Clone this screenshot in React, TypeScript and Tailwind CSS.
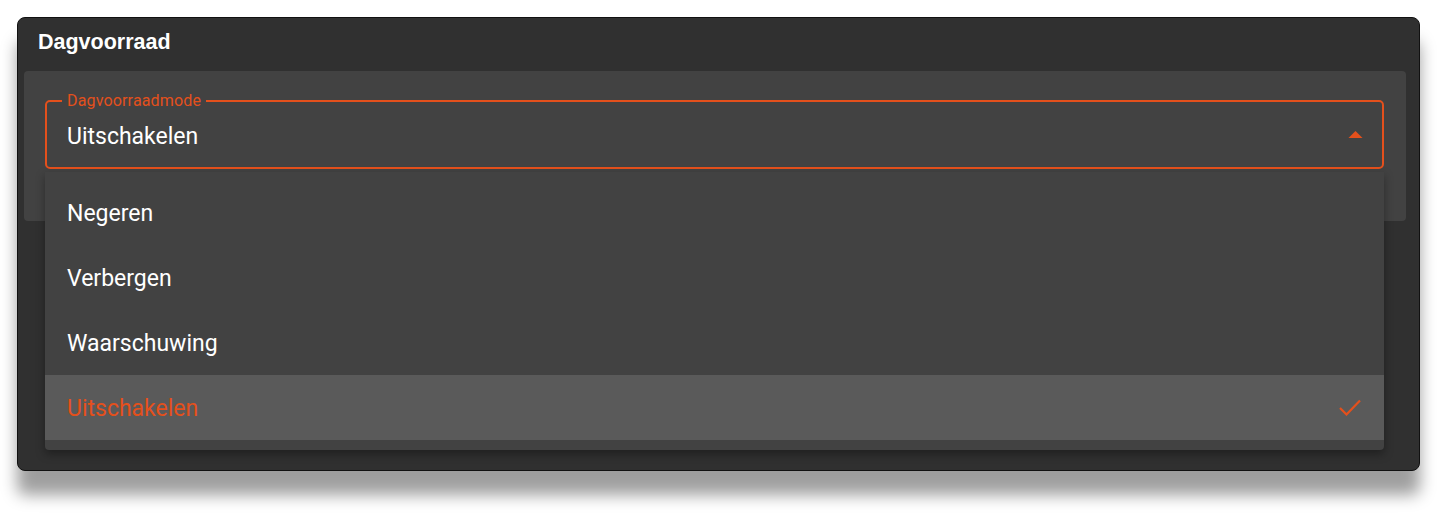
const options = ['Negeren', 'Verbergen', 'Waarschuwing', 'Uitschakelen']
const selected = 'Uitschakelen'

export default function App() {
  return (
    <div className="min-h-[519px] bg-white pl-[17px] pr-[17px] pt-[17px] font-['Roboto',sans-serif]">
      <div className="relative h-[454px] w-[1403px] rounded-[8px] border border-[#111] bg-[#303030] shadow-[0_24px_16px_rgba(0,0,0,0.38)]">
        <h2 className="px-5 pt-[9px] pb-[14px] font-['Liberation_Sans',sans-serif] text-[21.5px] font-bold leading-[30px] text-white">
          Dagvoorraad
        </h2>

        <div className="ml-[6px] mr-[13px] rounded-[4px] bg-[#424242] pl-[21px] pr-[22px] pt-[29px] pb-[52px]">
          <div className="relative flex h-[69px] items-center justify-between rounded-[5px] border-2 border-[#e4501c] pl-[20px] pr-[19px]">
            <span className="absolute left-[15px] top-[-10px] bg-[#424242] px-[5px] text-[16px] leading-[18px] tracking-[0.01em] text-[#e4501c]">
              Dagvoorraadmode
            </span>
            <span className="pt-[6px] text-[23px] text-white">{selected}</span>
            <svg width="15" height="7" viewBox="0 0 15 7">
              <path d="M0.5 7 L7.5 0 L14.5 7 Z" fill="#e4501c" />
            </svg>
          </div>
        </div>

        {/* open dropdown menu, overlaid on the panel */}
        <div className="absolute left-[27px] top-[154px] w-[1339px] rounded-b-[4px] bg-[#424242] pt-[8px] pb-[10px] shadow-[0_4px_10px_rgba(0,0,0,0.35)]">
          {options.map((opt) => (
            <div
              key={opt}
              className={
                opt === selected
                  ? 'flex h-[65px] items-center justify-between bg-[#5a5a5a] pl-[22px] pr-[23px] pt-[4px] text-[23px] text-[#e4501c]'
                  : 'flex h-[65px] items-center justify-between pl-[22px] pr-[23px] pt-[4px] text-[23px] text-white'
              }
            >
              <span>{opt}</span>
              {opt === selected && (
                <svg width="22" height="17" viewBox="0 0 22 17" className="mb-[4px]">
                  <path d="M1 9 L7.5 15.5 L21 1.5" fill="none" stroke="#e4501c" strokeWidth="2.2" />
                </svg>
              )}
            </div>
          ))}
        </div>
      </div>
    </div>
  )
}
